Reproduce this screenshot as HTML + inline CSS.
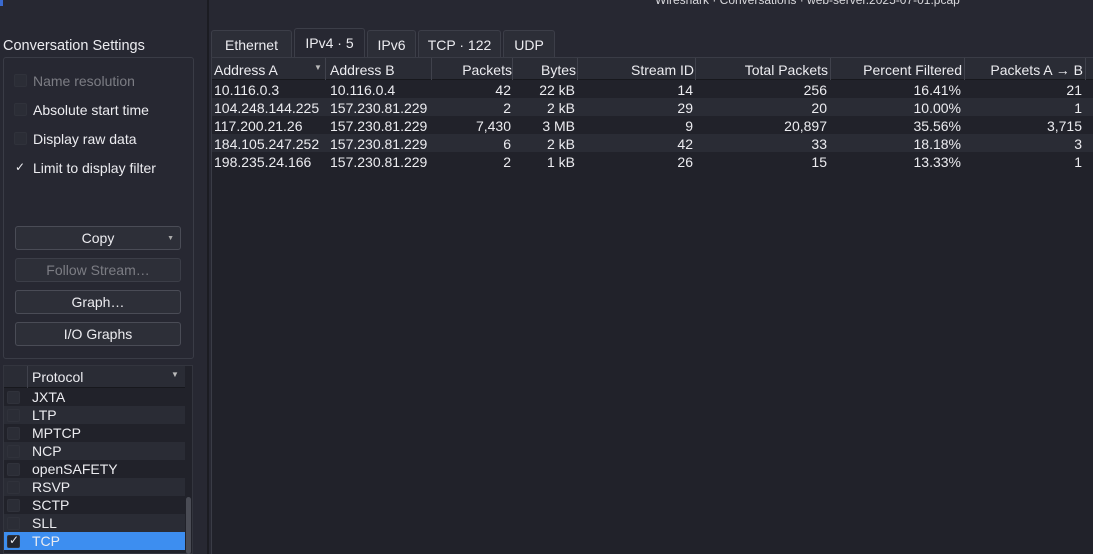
<!DOCTYPE html>
<html><head><style>
*{box-sizing:border-box;margin:0;padding:0}
body{width:1093px;height:554px;background:#272832;font-family:"Liberation Sans","DejaVu Sans",sans-serif;font-size:14px;color:#ececf0;position:relative;overflow:hidden}
.a{position:absolute;white-space:nowrap}
.title{left:655px;top:-7px;font-size:12px;color:#d8d8dc}
.gb{left:3px;top:57px;width:191px;height:302px;border:1px solid #3a3c46;border-radius:3px}
.cb{width:13px;height:13px;background:#2b2d36;border:1px solid #30323b;border-radius:2px}
.btn{left:15px;width:166px;height:24px;background:#2d2f38;border:1px solid #4a4c56;border-radius:3px;text-align:center;line-height:23px}
.tab{top:30px;height:27px;background:#2c2e37;border:1px solid #3c3e48;border-bottom:none;border-radius:3px 3px 0 0;text-align:center;line-height:28px}
.tbl{left:211px;top:57px;width:882px;height:497px;background:#21222a;border-top:1px solid #3a3c46;border-left:1px solid #3a3c46}
.hdr{left:212px;top:58px;width:881px;height:22px;background:#2a2c35;border-bottom:1px solid #17181d}
.row{left:212px;width:881px;height:18px}
.c{position:absolute;top:1px;line-height:18px}
.r{text-align:right}
.hs{position:absolute;top:0;width:1px;height:22px;background:#40424c}
.pl{left:3px;top:365px;width:190px;height:189px;background:#21222a;border:1px solid #33353e}
.prow{left:4px;width:181px;height:18px}
</style></head><body>
<div class="a title">Wireshark · Conversations · web-server.2025-07-01.pcap</div>
<div class="a" style="left:0;top:0;width:3px;height:6px;background:#3a6ad0"></div>
<div class="a" style="left:207px;top:0;width:2px;height:554px;background:#1b1c22"></div>
<div class="a" style="left:3px;top:38px;font-size:14.5px">Conversation Settings</div>
<div class="a gb"></div>
<div class="a cb" style="left:14px;top:74px"></div><div class="a" style="left:33px;top:73px;color:#7c7d84">Name resolution</div>
<div class="a cb" style="left:14px;top:103px"></div><div class="a" style="left:33px;top:102px">Absolute start time</div>
<div class="a cb" style="left:14px;top:132px"></div><div class="a" style="left:33px;top:131px">Display raw data</div>
<div class="a" style="left:15px;top:160px;font-size:12px">✓</div><div class="a" style="left:33px;top:160px">Limit to display filter</div>
<div class="a btn" style="top:226px">Copy<span style="position:absolute;right:6px;top:0;font-size:7px;color:#aaa">▼</span></div>
<div class="a btn" style="top:258px;color:#7c7d84;border-color:#3c3e48">Follow Stream…</div>
<div class="a btn" style="top:290px">Graph…</div>
<div class="a btn" style="top:322px">I/O Graphs</div>

<div class="a pl"></div>
<div class="a" style="left:4px;top:366px;width:181px;height:22px;background:#2a2c35;border-bottom:1px solid #17181d"></div>
<div class="a" style="left:27px;top:366px;width:1px;height:22px;background:#40424c"></div>
<div class="a" style="left:32px;top:369px">Protocol</div>
<div class="a" style="left:171px;top:370px;font-size:8px;color:#bbb">▼</div>
<div class="a prow" style="top:388px"></div>
<div class="a prow" style="top:406px;background:#2a2c35"></div>
<div class="a prow" style="top:424px"></div>
<div class="a prow" style="top:442px;background:#2a2c35"></div>
<div class="a prow" style="top:460px"></div>
<div class="a prow" style="top:478px;background:#2a2c35"></div>
<div class="a prow" style="top:496px"></div>
<div class="a prow" style="top:514px;background:#2a2c35"></div>
<div class="a prow" style="top:532px;background:#3d8ef0"></div>
<div class="a cb" style="left:7px;top:391px"></div><div class="a" style="left:32px;top:389px">JXTA</div>
<div class="a cb" style="left:7px;top:409px"></div><div class="a" style="left:32px;top:407px">LTP</div>
<div class="a cb" style="left:7px;top:427px"></div><div class="a" style="left:32px;top:425px">MPTCP</div>
<div class="a cb" style="left:7px;top:445px"></div><div class="a" style="left:32px;top:443px">NCP</div>
<div class="a cb" style="left:7px;top:463px"></div><div class="a" style="left:32px;top:461px">openSAFETY</div>
<div class="a cb" style="left:7px;top:481px"></div><div class="a" style="left:32px;top:479px">RSVP</div>
<div class="a cb" style="left:7px;top:499px"></div><div class="a" style="left:32px;top:497px">SCTP</div>
<div class="a cb" style="left:7px;top:517px"></div><div class="a" style="left:32px;top:515px">SLL</div>
<div class="a cb" style="left:7px;top:535px;background:#23252e"></div><div class="a" style="left:9px;top:533px;font-size:12px">✓</div><div class="a" style="left:32px;top:533px">TCP</div>
<div class="a" style="left:186px;top:497px;width:5px;height:57px;background:#4a4c55;border-radius:3px"></div>

<div class="a tab" style="left:211px;width:81px">Ethernet</div>
<div class="a tab" style="left:294px;top:28px;height:30px;width:71px;background:#272832">IPv4 · 5</div>
<div class="a tab" style="left:367px;width:49px">IPv6</div>
<div class="a tab" style="left:418px;width:83px">TCP · 122</div>
<div class="a tab" style="left:503px;width:52px">UDP</div>

<div class="a tbl"></div>
<div class="a hdr">
<span class="c" style="left:2px;line-height:22px">Address A</span><span class="c" style="left:102px;top:1px;font-size:8px;color:#bbb;line-height:18px">▼</span>
<div class="hs" style="left:113px"></div>
<span class="c" style="left:118px;line-height:22px">Address B</span>
<div class="hs" style="left:219px"></div>
<span class="c r" style="left:220px;width:80px;line-height:22px">Packets</span>
<div class="hs" style="left:300px"></div>
<span class="c r" style="left:301px;width:63px;line-height:22px">Bytes</span>
<div class="hs" style="left:365px"></div>
<span class="c r" style="left:366px;width:116px;line-height:22px">Stream ID</span>
<div class="hs" style="left:483px"></div>
<span class="c r" style="left:484px;width:132px;line-height:22px">Total Packets</span>
<div class="hs" style="left:618px"></div>
<span class="c r" style="left:619px;width:131px;line-height:22px">Percent Filtered</span>
<div class="hs" style="left:752px"></div>
<span class="c r" style="left:753px;width:118px;line-height:22px">Packets A → B</span>
<div class="hs" style="left:873px"></div>
</div>

<div class="a row" style="top:80px"><span class="c" style="left:2px">10.116.0.3</span><span class="c" style="left:118px">10.116.0.4</span><span class="c r" style="left:220px;width:79px">42</span><span class="c r" style="left:301px;width:62px">22 kB</span><span class="c r" style="left:366px;width:115px">14</span><span class="c r" style="left:484px;width:131px">256</span><span class="c r" style="left:619px;width:130px">16.41%</span><span class="c r" style="left:753px;width:117px">21</span></div>
<div class="a row" style="top:98px;background:#2a2c35"><span class="c" style="left:2px">104.248.144.225</span><span class="c" style="left:118px">157.230.81.229</span><span class="c r" style="left:220px;width:79px">2</span><span class="c r" style="left:301px;width:62px">2 kB</span><span class="c r" style="left:366px;width:115px">29</span><span class="c r" style="left:484px;width:131px">20</span><span class="c r" style="left:619px;width:130px">10.00%</span><span class="c r" style="left:753px;width:117px">1</span></div>
<div class="a row" style="top:116px"><span class="c" style="left:2px">117.200.21.26</span><span class="c" style="left:118px">157.230.81.229</span><span class="c r" style="left:220px;width:79px">7,430</span><span class="c r" style="left:301px;width:62px">3 MB</span><span class="c r" style="left:366px;width:115px">9</span><span class="c r" style="left:484px;width:131px">20,897</span><span class="c r" style="left:619px;width:130px">35.56%</span><span class="c r" style="left:753px;width:117px">3,715</span></div>
<div class="a row" style="top:134px;background:#2a2c35"><span class="c" style="left:2px">184.105.247.252</span><span class="c" style="left:118px">157.230.81.229</span><span class="c r" style="left:220px;width:79px">6</span><span class="c r" style="left:301px;width:62px">2 kB</span><span class="c r" style="left:366px;width:115px">42</span><span class="c r" style="left:484px;width:131px">33</span><span class="c r" style="left:619px;width:130px">18.18%</span><span class="c r" style="left:753px;width:117px">3</span></div>
<div class="a row" style="top:152px"><span class="c" style="left:2px">198.235.24.166</span><span class="c" style="left:118px">157.230.81.229</span><span class="c r" style="left:220px;width:79px">2</span><span class="c r" style="left:301px;width:62px">1 kB</span><span class="c r" style="left:366px;width:115px">26</span><span class="c r" style="left:484px;width:131px">15</span><span class="c r" style="left:619px;width:130px">13.33%</span><span class="c r" style="left:753px;width:117px">1</span></div>
</body></html>
